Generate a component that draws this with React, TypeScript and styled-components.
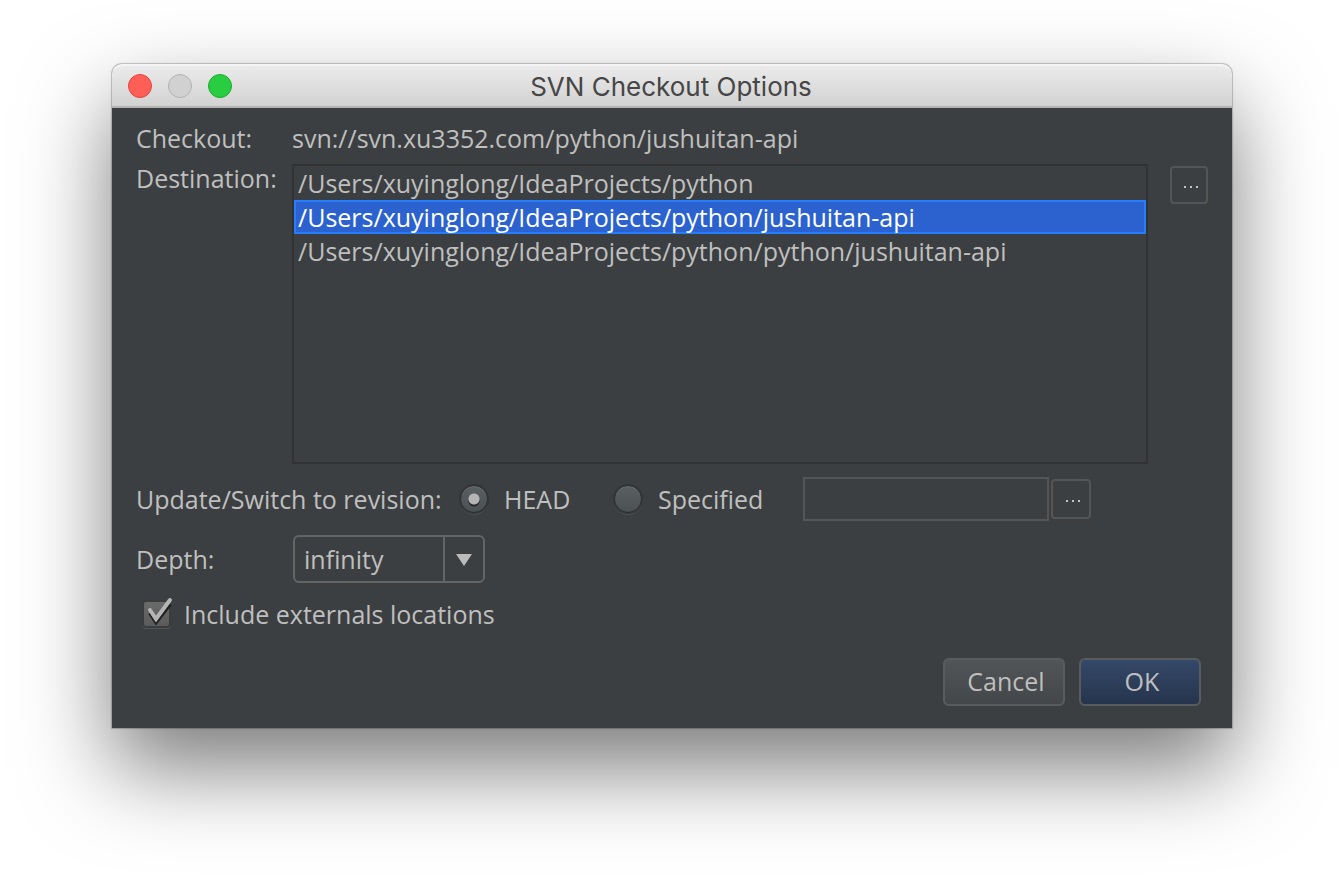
import React, { useState } from "react";
import styled, { createGlobalStyle, css } from "styled-components";

const GlobalStyle = createGlobalStyle`
  *, *::before, *::after { box-sizing: border-box; }
  body {
    margin: 0;
    background: #ffffff;
    color: #bfbfbf;
    font: 500 25px/32px "Open Sans", "Noto Sans", sans-serif;
    overflow-x: hidden;
  }
  button, input, select { font: inherit; color: inherit; margin: 0; }
`;

const Desktop = styled.main`
  padding: 64px 112px 160px;
`;

const Dialog = styled.section`
  border-radius: 10px 10px 0 0;
  background: #3c3f41;
  box-shadow: 0 0 1px 1px rgba(0, 0, 0, 0.22), 0 40px 88px rgba(0, 0, 0, 0.52);
`;

const TitleBar = styled.header`
  display: grid;
  grid-template-columns: 1fr auto 1fr;
  align-items: center;
  height: 44px;
  padding: 2px 18px 0 16px;
  border-radius: 10px 10px 0 0;
  border-bottom: 2px solid #b4b4b4;
  background: linear-gradient(#ececec, #d2d2d2);
  box-shadow: inset 0 2px 0 #f5f5f5;
`;

const Title = styled.h1`
  margin: 0;
  padding-top: 2px;
  color: #464646;
  font: 400 26px/32px Inter, Roboto, sans-serif;
`;

const Lights = styled.div`
  display: flex;
  gap: 16px;
`;

const Light = styled.button<{ $fill: string; $edge: string }>`
  width: 24px;
  height: 24px;
  padding: 0;
  border: 1px solid ${(p) => p.$edge};
  border-radius: 50%;
  background: ${(p) => p.$fill};
`;

const Form = styled.form`
  display: flex;
  flex-direction: column;
  padding: 14px 24px 22px;
`;

const Row = styled.div<{ $top?: boolean; $height?: number }>`
  display: flex;
  align-items: ${(p) => (p.$top ? "flex-start" : "center")};
  min-height: ${(p) => p.$height ?? 32}px;
`;

const Caption = styled.label`
  flex: 0 0 156px;
`;

const DestinationRow = styled(Row)`
  margin: 8px 0 12px;
`;

const List = styled.ul`
  flex: 1;
  height: 300px;
  margin: 2px 22px 0 0;
  padding: 0;
  border: 2px solid #323232;
  list-style: none;
  overflow: hidden;
`;

const Item = styled.li<{ $selected: boolean }>`
  height: 34px;
  padding: 0 2px;
  border: 2px solid transparent;
  line-height: 30px;
  white-space: nowrap;
  cursor: default;
  ${(p) =>
    p.$selected &&
    css`
      border-color: #257dfb;
      background: #2b62cf;
      color: #ffffff;
    `}
`;

const MoreButton = styled.button<{ $size: number }>`
  display: flex;
  align-items: center;
  justify-content: center;
  width: ${(p) => p.$size}px;
  height: ${(p) => p.$size}px;
  padding: 4px 0 0 4px;
  border: 2px solid #555555;
  border-radius: 4px;
  background: transparent;
`;

const ListButton = styled(MoreButton)`
  margin-top: 4px;
`;

const Options = styled.fieldset`
  display: flex;
  align-items: center;
  min-width: 0;
  margin: 0;
  padding: 0;
  border: 0;
`;

const Legend = styled.span`
  flex: 0 0 324px;
`;

const Radio = styled.input`
  appearance: none;
  width: 28px;
  height: 28px;
  border: 1px solid #2c2e2f;
  border-radius: 50%;
  background: linear-gradient(#5a5f62, #4b5052);
  box-shadow: 0 0 0 1px #333536, 0 2px 1px #4c4f51, inset 0 1px 0 #6d7173;
  &:checked {
    background: radial-gradient(circle at 50% 50%, #b4b4b4 0 5px, transparent 6px),
      radial-gradient(circle at 50% 58%, #26282a 0 5px, transparent 6px),
      linear-gradient(#5a5f62, #4b5052);
  }
`;

const Choice = styled.label<{ $width: number }>`
  flex: 0 0 ${(p) => p.$width}px;
  padding-left: 16px;
`;

const RevisionField = styled.input`
  flex: 0 1 246px;
  min-width: 0;
  height: 44px;
  margin-right: 2px;
  padding: 0 8px;
  border: 2px solid #555555;
  background: transparent;
`;

const SelectBox = styled.div`
  position: relative;
  width: 192px;
  margin-left: 1px;
`;

const Select = styled.select`
  appearance: none;
  display: block;
  width: 100%;
  height: 48px;
  padding: 0 48px 0 9px;
  border: 2px solid #646464;
  border-radius: 6px;
  background: #3c3f41;
`;

const SelectArrow = styled.svg`
  position: absolute;
  top: 0;
  right: 0;
  pointer-events: none;
`;

const CheckLabel = styled.label`
  display: flex;
  align-items: center;
  gap: 10px;
  padding-left: 4px;
`;

const CheckSlot = styled.span`
  position: relative;
  display: flex;
  width: 34px;
  height: 36px;
`;

const CheckInput = styled.input`
  appearance: none;
  width: 100%;
  height: 100%;
`;

const CheckArt = styled.svg`
  position: absolute;
  inset: 0;
  pointer-events: none;
`;

const Actions = styled.footer`
  display: flex;
  justify-content: flex-end;
  gap: 14px;
  margin-top: 26px;
  padding-right: 7px;
`;

const ActionButton = styled.button<{ $primary?: boolean }>`
  width: 122px;
  height: 48px;
  padding: 0 0 2px 4px;
  border: 2px solid #595c5e;
  border-radius: 6px;
  background: ${(p) =>
    p.$primary ? "linear-gradient(#35496a, #25344b)" : "linear-gradient(#525658, #424648)"};
  background-origin: border-box;
`;

const Dots = () => (
  <svg width="14" height="2" viewBox="0 0 14 2" fill="#c4c4c4" aria-hidden="true">
    <rect width="2" height="2" />
    <rect x="6" width="2" height="2" />
    <rect x="12" width="2" height="2" />
  </svg>
);

const destinations = [
  "/Users/xuyinglong/IdeaProjects/python",
  "/Users/xuyinglong/IdeaProjects/python/jushuitan-api",
  "/Users/xuyinglong/IdeaProjects/python/python/jushuitan-api",
];

export default function App() {
  const [selected, setSelected] = useState(1);
  const [externals, setExternals] = useState(true);

  return (
    <>
      <GlobalStyle />
      <Desktop>
        <Dialog role="dialog" aria-labelledby="title">
          <TitleBar>
            <Lights>
              <Light type="button" aria-label="Close" $fill="#ff5f57" $edge="#e2443f" />
              <Light type="button" aria-label="Minimize" disabled $fill="#d1d1d1" $edge="#b2b2b2" />
              <Light type="button" aria-label="Zoom" $fill="#28cd41" $edge="#1daa2f" />
            </Lights>
            <Title id="title">SVN Checkout Options</Title>
          </TitleBar>
          <Form onSubmit={(e) => e.preventDefault()}>
            <Row>
              <Caption as="span">Checkout:</Caption>
              <span>svn://svn.xu3352.com/python/jushuitan-api</span>
            </Row>
            <DestinationRow $top>
              <Caption as="span" id="destination">Destination:</Caption>
              <List role="listbox" aria-labelledby="destination" tabIndex={0}>
                {destinations.map((path, i) => (
                  <Item
                    key={path}
                    role="option"
                    aria-selected={i === selected}
                    $selected={i === selected}
                    onClick={() => setSelected(i)}
                  >
                    {path}
                  </Item>
                ))}
              </List>
              <ListButton type="button" aria-label="Browse destination" $size={38}>
                <Dots />
              </ListButton>
            </DestinationRow>
            <Row $height={46}>
              <Options aria-labelledby="revision">
                <Legend id="revision">Update/Switch to revision:</Legend>
                <Radio type="radio" name="revision" id="head" defaultChecked />
                <Choice htmlFor="head" $width={126}>HEAD</Choice>
                <Radio type="radio" name="revision" id="specified" />
                <Choice htmlFor="specified" $width={161}>Specified</Choice>
                <RevisionField type="text" aria-label="Specified revision" />
                <MoreButton type="button" aria-label="Browse revisions" $size={40}>
                  <Dots />
                </MoreButton>
              </Options>
            </Row>
            <Row $height={74}>
              <Caption htmlFor="depth">Depth:</Caption>
              <SelectBox>
                <Select id="depth" defaultValue="infinity">
                  <option>infinity</option>
                  <option>immediates</option>
                  <option>files</option>
                  <option>empty</option>
                </Select>
                <SelectArrow width="44" height="48" viewBox="0 0 44 48" aria-hidden="true">
                  <rect x="2" y="2" width="2" height="44" fill="#646464" />
                  <path d="M15 19H31L23 31Z" fill="#bbbbbb" />
                </SelectArrow>
              </SelectBox>
            </Row>
            <Row $height={36}>
              <CheckLabel>
                <CheckSlot>
                  <CheckInput
                    type="checkbox"
                    checked={externals}
                    onChange={(e) => setExternals(e.target.checked)}
                  />
                  <CheckArt width="34" height="36" viewBox="0 0 34 36" fill="none" aria-hidden="true">
                    <defs>
                      <linearGradient id="box" x1="0" y1="0" x2="0" y2="1">
                        <stop stopColor="#6b6b6b" />
                        <stop offset="1" stopColor="#5a5a5a" />
                      </linearGradient>
                    </defs>
                    <rect x="2" y="6" width="29" height="27" rx="4" fill="#525557" />
                    <rect x="3" y="5" width="27" height="26" rx="3" fill="url(#box)" stroke="#3a3c3d" strokeWidth="2" />
                    {externals && (
                      <>
                        <path d="M10 17L16 26L30 8" stroke="#1e1e1e" strokeWidth="4" />
                        <path d="M10 14L16 23L30 4" stroke="#b4b4b4" strokeWidth="4" strokeLinecap="round" />
                      </>
                    )}
                  </CheckArt>
                </CheckSlot>
                Include externals locations
              </CheckLabel>
            </Row>
            <Actions>
              <ActionButton type="button">Cancel</ActionButton>
              <ActionButton type="submit" $primary>OK</ActionButton>
            </Actions>
          </Form>
        </Dialog>
      </Desktop>
    </>
  );
}
